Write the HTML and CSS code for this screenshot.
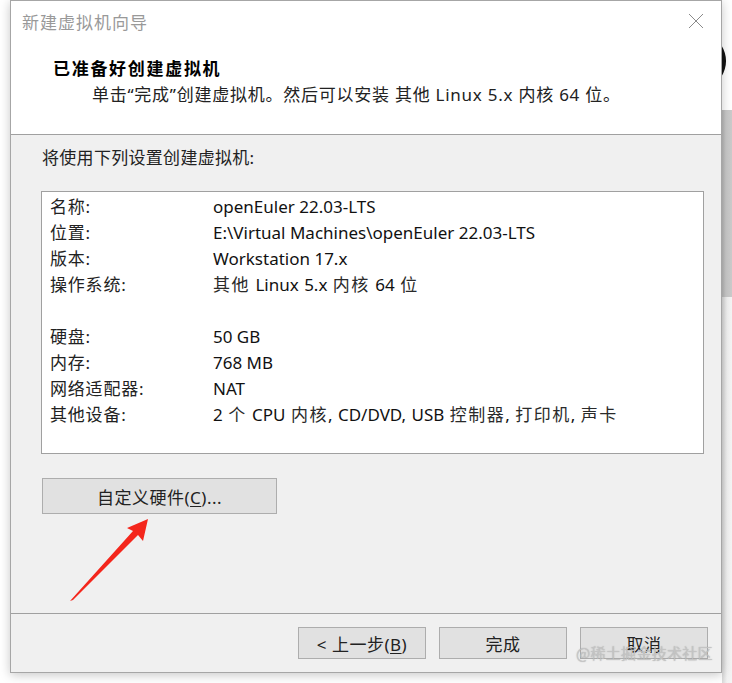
FILE: index.html
```html
<!DOCTYPE html>
<html lang="zh-CN">
<head>
<meta charset="utf-8">
<title>新建虚拟机向导</title>
<link rel="stylesheet" href="styles.css">
</head>
<body>
<div class="desktop">
  <div class="bg-strip bg-white"></div>
  <div class="bg-strip bg-gray"></div>
  <div class="bg-strip bg-light"></div>
  <svg class="bg-glyph" width="14" height="34" viewBox="0 0 14 34"><path d="M2 2 Q11 17 2 32" fill="none" stroke="#111" stroke-width="5"/></svg>

  <div class="window">
    <div class="titlebar">
      <span class="title">新建虚拟机向导</span>
      <svg class="close" width="16" height="16" viewBox="0 0 16 16"><path d="M1 1 L15 15 M15 1 L1 15" stroke="#8a8a8a" stroke-width="1" fill="none"/></svg>
    </div>
    <div class="header">
      <div class="h-title">已准备好创建虚拟机</div>
      <div class="h-sub">单击“完成”创建虚拟机。然后可以安装 其他 Linux 5.x 内核 64 位。</div>
    </div>
    <div class="body">
      <div class="intro">将使用下列设置创建虚拟机:</div>
      <div class="listbox">
        <div class="row"><span class="lab">名称:</span><span class="val">openEuler 22.03-LTS</span></div>
        <div class="row"><span class="lab">位置:</span><span class="val">E:\Virtual Machines\openEuler 22.03-LTS</span></div>
        <div class="row"><span class="lab">版本:</span><span class="val">Workstation 17.x</span></div>
        <div class="row"><span class="lab">操作系统:</span><span class="val mixed"><span class="zh">其他</span> Linux 5.x <span class="zh">内核</span> 64 <span class="zh">位</span></span></div>
        <div class="row"></div>
        <div class="row"><span class="lab">硬盘:</span><span class="val">50 GB</span></div>
        <div class="row"><span class="lab">内存:</span><span class="val">768 MB</span></div>
        <div class="row"><span class="lab">网络适配器:</span><span class="val">NAT</span></div>
        <div class="row"><span class="lab">其他设备:</span><span class="val mixed">2 <span class="zh">个</span> CPU <span class="zh">内核</span>, CD/DVD, USB <span class="zh">控制器</span>, <span class="zh">打印机</span>, <span class="zh">声卡</span></span></div>
      </div>
      <div class="custom-row">
        <button class="btn btn-custom">自定义硬件(<u>C</u>)...</button>
      </div>
    </div>
    <div class="footer">
      <button class="btn btn-foot">&lt; 上一步(<u>B</u>)</button>
      <button class="btn btn-foot">完成</button>
      <button class="btn btn-foot">取消</button>
    </div>
  </div>

  <svg class="arrow" width="732" height="683" viewBox="0 0 732 683">
    <polygon points="70,601 133,531 127,528 148,519 143,541 138,535 73,600" fill="#f4261c"/>
  </svg>
  <div class="watermark">@稀土掘金技术社区</div>
</div>
</body>
</html>
```

FILE: styles.css
```css
* { box-sizing: border-box; }
html, body { margin: 0; padding: 0; background: #ffffff; }
body {
  font-family: "Noto Sans", "Noto Sans CJK SC", sans-serif;
  color: #1e1e1e;
  width: 732px;
  height: 683px;
  overflow: hidden;
}
.desktop {
  position: relative;
  width: 732px;
  height: 683px;
  background: #ffffff;
}
.bg-strip { position: absolute; left: 722px; width: 10px; }
.bg-white { top: 0; height: 110px; background: #ffffff; }
.bg-gray { top: 110px; height: 187px; background: linear-gradient(to right, #b8b8b8, #c9c9c9 40%, #cacaca); }
.bg-light { top: 297px; height: 386px; background: linear-gradient(to right, #d8d8d8, #f2f2f2 50%, #f4f4f4); }
.bg-glyph { position: absolute; left: 717px; top: 44px; }

.window {
  position: relative;
  margin-left: 10px;
  width: 712px;
  height: 673px;
  border: 1px solid #a6a6a6;
  background: #f0f0f0;
  box-shadow: 0 2px 10px rgba(0,0,0,0.22);
  display: flex;
  flex-direction: column;
}
.titlebar {
  height: 44px;
  background: #ffffff;
  display: flex;
  align-items: center;
  justify-content: space-between;
  padding: 0 17px 0 11px;
}
.title {
  font-family: "Noto Sans CJK SC", sans-serif;
  font-size: 17px;
  color: #999999;
  letter-spacing: 1px;
  margin-top: -3px;
}
.close { margin-top: -4px; }
.header {
  height: 90px;
  background: #ffffff;
  border-bottom: 1px solid #a0a0a0;
  padding: 10px 0 0 42px;
}
.h-title {
  font-family: "Noto Sans CJK SC", sans-serif;
  font-weight: 700;
  font-size: 17px;
  line-height: 26px;
  color: #000000;
  letter-spacing: 1.7px;
}
.h-sub {
  font-size: 17px;
  line-height: 26px;
  padding-left: 39px;
  margin-top: 1px;
  color: #222;
  letter-spacing: 0.75px;
}
.body {
  flex: 1;
  padding: 10px 0 0 30px;
}
.intro {
  font-size: 17px;
  line-height: 26px;
  color: #222;
  padding-left: 1px;
  height: 46px;
  letter-spacing: 0.3px;
}
.listbox {
  width: 663px;
  height: 263px;
  background: #ffffff;
  border: 1px solid #a0a0a0;
  padding: 2px 0 0 8px;
}
.row {
  display: flex;
  height: 26px;
  line-height: 26px;
  font-size: 17px;
}
.lab { width: 163px; flex: none; color: #222; letter-spacing: 0.8px; }
.val { color: #111; white-space: nowrap; }
.mixed { word-spacing: 1px; }
.zh { letter-spacing: 1.5px; color: #2a2a2a; }

.custom-row { padding-top: 24px; padding-left: 1px; }
.btn {
  font-family: "Noto Sans", "Noto Sans CJK SC", sans-serif;
  font-size: 17px;
  color: #222;
  background: #e1e1e1;
  border: 1px solid #adadad;
  padding: 0;
  margin: 0;
  letter-spacing: 0.5px;
}
.btn u { text-underline-offset: 2px; }
.btn-custom { width: 235px; height: 36px; }

.footer {
  height: 59px;
  border-top: 1px solid #a0a0a0;
  display: flex;
  justify-content: flex-end;
  align-items: flex-start;
  gap: 13px;
  padding: 13px 13px 0 0;
}
.btn-foot { width: 128px; height: 32px; }

.arrow { position: absolute; left: 0; top: 0; pointer-events: none; }
.watermark {
  position: absolute;
  left: 576px;
  top: 641px;
  font-family: "Noto Sans CJK SC", sans-serif;
  font-size: 15px;
  line-height: 24px;
  color: rgba(200,200,200,0.85);
  text-shadow: 0 0 1px rgba(110,110,110,0.5);
  letter-spacing: 0.3px;
}
```
